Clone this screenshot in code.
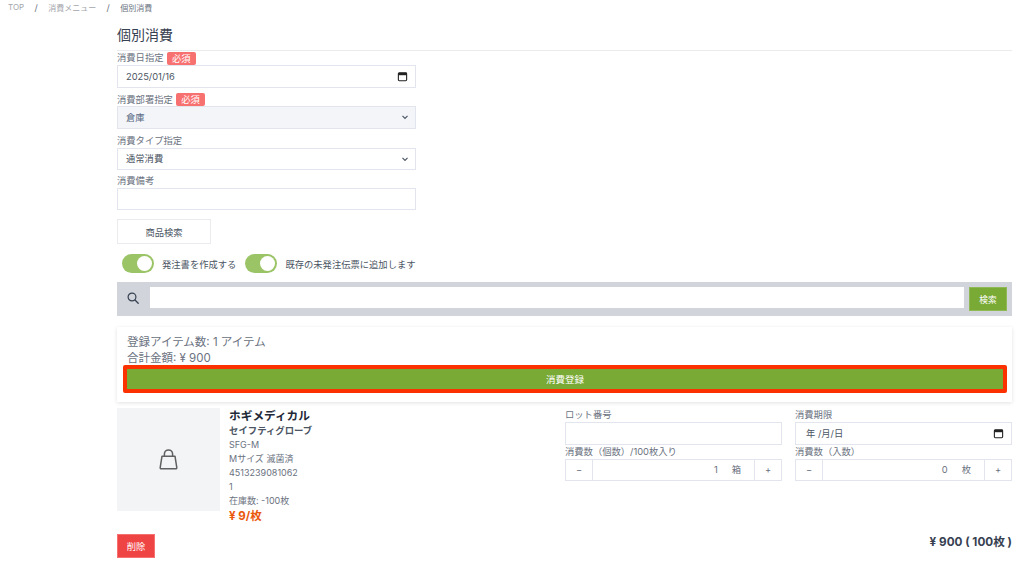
<template>
  <div class="page">
    <nav class="crumbs">
      <span class="c">TOP</span><span class="sl">/</span><span class="c">消費メニュー</span><span class="sl">/</span><span class="c cur">個別消費</span>
    </nav>
    <main class="main">
      <h1 class="title">個別消費</h1>
      <section class="form">
        <div class="lab lab1">消費日指定<span class="badge">必須</span></div>
        <div class="field f-date">2025/01/16
          <svg class="cal" viewBox="0 0 12 12"><rect x="1.5" y="2" width="9" height="8.6" rx="1" fill="none" stroke="#222" stroke-width="1.2"/><rect x="1.5" y="2" width="9" height="2.6" fill="#222"/></svg>
        </div>
        <div class="lab lab2">消費部署指定<span class="badge">必須</span></div>
        <div class="field sel tint">倉庫
          <svg class="chev" viewBox="0 0 10 10"><path d="M2.5 3.8 5 6.3l2.5-2.5" fill="none" stroke="#4b5563" stroke-width="1.2"/></svg>
        </div>
        <div class="lab lab3">消費タイプ指定</div>
        <div class="field sel short">通常消費
          <svg class="chev" viewBox="0 0 10 10"><path d="M2.5 3.8 5 6.3l2.5-2.5" fill="none" stroke="#4b5563" stroke-width="1.2"/></svg>
        </div>
        <div class="lab lab4">消費備考</div>
        <div class="field short"></div>
      </section>
      <button class="btn-search-item">商品検索</button>
      <div class="toggles">
        <span class="tg"><i class="knob"></i></span><span class="tl t1">発注書を作成する</span>
        <span class="tg"><i class="knob"></i></span><span class="tl">既存の未発注伝票に追加します</span>
      </div>
      <div class="searchbar">
        <svg class="mag" viewBox="0 0 12 12"><circle cx="5" cy="5" r="3.9" fill="none" stroke="#374151" stroke-width="1.2"/><path d="M8 8l3.2 3.2" stroke="#374151" stroke-width="1.3" stroke-linecap="round"/></svg>
        <div class="sinput"></div>
        <button class="sbtn">検索</button>
      </div>
      <div class="card">
        <p class="sum">登録アイテム数: 1 アイテム</p>
        <p class="sum">合計金額: ¥ 900</p>
        <button class="reg">消費登録</button>
      </div>
      <div class="item">
        <div class="thumb">
          <svg viewBox="0 0 19 21" class="bag"><path d="M3 7.2h13l1.8 11.4a1 1 0 0 1-1 1.2H2.2a1 1 0 0 1-1-1.2z" fill="none" stroke="#606060" stroke-width="1.5" stroke-linejoin="round"/><path d="M5.4 7V5a4.1 4.1 0 0 1 8.2 0v2" fill="none" stroke="#606060" stroke-width="1.5"/></svg>
        </div>
        <div class="info">
          <div class="maker">ホギメディカル</div>
          <div class="pname">セイフティグローブ</div>
          <div class="meta">SFG-M</div>
          <div class="meta">Mサイズ 滅菌済</div>
          <div class="meta">4513239081062</div>
          <div class="meta">1</div>
          <div class="meta">在庫数: -100枚</div>
          <div class="price">¥ 9/枚</div>
        </div>
        <div class="inputs">
          <div class="col">
            <div class="lab">ロット番号</div>
            <div class="field f22"></div>
          </div>
          <div class="col">
            <div class="lab">消費期限</div>
            <div class="field f22 ym">年 /月/日
              <svg class="cal" viewBox="0 0 12 12"><rect x="1.5" y="2" width="9" height="8.6" rx="1" fill="none" stroke="#222" stroke-width="1.2"/><rect x="1.5" y="2" width="9" height="2.6" fill="#222"/></svg>
            </div>
          </div>
          <div class="col">
            <div class="lab">消費数（個数）/100枚入り</div>
            <div class="stepper"><span class="st">−</span><span class="val"><b>1</b><b class="unit">箱</b></span><span class="st">+</span></div>
          </div>
          <div class="col">
            <div class="lab">消費数（入数）</div>
            <div class="stepper"><span class="st">−</span><span class="val"><b>0</b><b class="unit">枚</b></span><span class="st">+</span></div>
          </div>
        </div>
      </div>
      <div class="foot">
        <button class="del">削除</button>
        <div class="total">¥ 900 ( 100枚 )</div>
      </div>
    </main>
  </div>
</template>

<style>
html, body { margin: 0; background: #fff; }
</style>

<style scoped>
.page {
  width: 1024px; height: 565px; overflow: hidden; box-sizing: border-box;
  font-family: Inter, "Noto Sans CJK JP", sans-serif; color: #4b5563; background: #fff;
}
.crumbs { display: flex; align-items: center; height: 14px; padding-left: 8px; font-size: 8px; color: #a3a6ab; }
.sl { width: 24px; text-align: center; color: #6b7280; font-size: 9px; }
.cur { color: #6b7280; }
.main { padding: 0 12px 0 117px; }
.title { margin: 11px 0 0; height: 26px; font-size: 14px; line-height: 19px; font-weight: 400; color: #374151; border-bottom: 1px solid #e9ebef; box-sizing: border-box; }
.form { width: 299px; }
.lab { font-size: 9.3px; line-height: 14px; color: #6b7280; display: flex; align-items: center; white-space: nowrap; }
.lab1 { height: 14px; }
.lab2 { height: 13px; margin-top: 5px; }
.lab3 { height: 15px; margin-top: 4px; }
.lab4 { height: 14px; margin-top: 4px; }
.badge { margin-left: 3px; padding: 0 5.5px; height: 13px; line-height: 13px; font-size: 9.3px; color: #fff; background: #f87171; border-radius: 2px; }
.field { position: relative; height: 23px; box-sizing: border-box; border: 1px solid #e2e5ee; background: #fff; padding-left: 8px; font-size: 9.3px; line-height: 21px; color: #4b5563; }
.short { height: 22px; line-height: 20px; }
.tint { background: #f3f5f9; color: #5b6b85; }
.cal { position: absolute; right: 7px; top: 5px; width: 11px; height: 11px; }
.chev { position: absolute; right: 5px; top: 5px; width: 10px; height: 10px; }
button { font-family: inherit; cursor: pointer; }
.btn-search-item { display: block; margin-top: 9px; width: 94px; height: 25px; border: 1px solid #e9ebef; background: #fff; font-size: 9.3px; color: #4b5563; padding: 0; }
.toggles { display: flex; align-items: center; margin-top: 10px; height: 19px; padding-left: 5px; }
.tg { position: relative; width: 32px; height: 19px; border-radius: 10px; background: #9bc467; flex: none; }
.knob { position: absolute; right: 2px; top: 2px; width: 15px; height: 15px; border-radius: 50%; background: #fff; }
.tl { margin-left: 8px; font-size: 9.3px; color: #4b5563; white-space: nowrap; }
.t1 { margin-right: 9px; }
.searchbar { display: flex; align-items: flex-start; margin-top: 9px; height: 34px; box-sizing: border-box; background: #d1d5db; padding: 5px 5px 0 10px; }
.mag { width: 12px; height: 12px; flex: none; margin-top: 5px; }
.sinput { margin-left: 11px; flex: 1; height: 21px; background: #fff; }
.sbtn { margin-left: 5px; width: 38px; height: 24px; background: #7aaa36; border: 1px solid #8fb955; color: #fff; font-size: 8.7px; padding: 0; }
.card { margin-top: 11px; height: 75px; box-sizing: border-box; padding: 8px 5px 0 6px; background: #fff; box-shadow: 0 1px 4px rgba(0,0,0,.12); }
.sum { margin: 0 0 0 4px; font-size: 11.5px; line-height: 15.5px; color: #6b7280; }
.reg { display: block; width: 100%; height: 28px; margin-top: -1px; background: #7aaa36; border: 4px solid #fb3200; border-radius: 2px; color: #fff; font-size: 9.5px; padding: 0; box-sizing: border-box; position: relative; }
.item { display: flex; margin-top: 6px; height: 122px; }
.thumb { width: 103px; height: 103px; background: #f3f4f6; display: flex; align-items: center; justify-content: center; flex: none; }
.bag { width: 19px; height: 21px; }
.info { margin-left: 9px; width: 336px; flex: none; }
.maker { font-size: 11.7px; line-height: 16px; font-weight: 700; color: #1f2937; }
.pname { font-size: 9.4px; line-height: 14px; font-weight: 700; color: #4b5563; }
.meta { font-size: 9px; line-height: 14px; color: #6b7280; }
.price { font-size: 11.5px; line-height: 16px; font-weight: 700; color: #ea580c; }
.inputs { flex: 1; display: grid; grid-template-columns: 217px 217px; column-gap: 13px; align-content: start; }
.col .lab { height: 14px; }
.ym { padding-left: 10px; }
.stepper { display: flex; height: 22px; box-sizing: border-box; border: 1px solid #e2e5ee; font-size: 9.3px; color: #6b7280; }
.st { width: 26px; flex: none; text-align: center; line-height: 20px; }
.val { flex: 1; border: solid #e2e5ee; border-width: 0 1px; display: flex; justify-content: flex-end; line-height: 20px; padding-right: 13px; }
.val b { font-weight: 400; }
.unit { margin-left: 14px; }
.foot { display: flex; justify-content: space-between; align-items: flex-start; margin-top: 4px; }
.del { width: 38px; height: 24px; background: #ef4444; border: 1px solid #f87171; color: #fff; font-size: 9.3px; padding: 0; }
.total { margin-top: 1px; font-size: 11.7px; line-height: 14px; font-weight: 700; color: #374151; }
</style>
